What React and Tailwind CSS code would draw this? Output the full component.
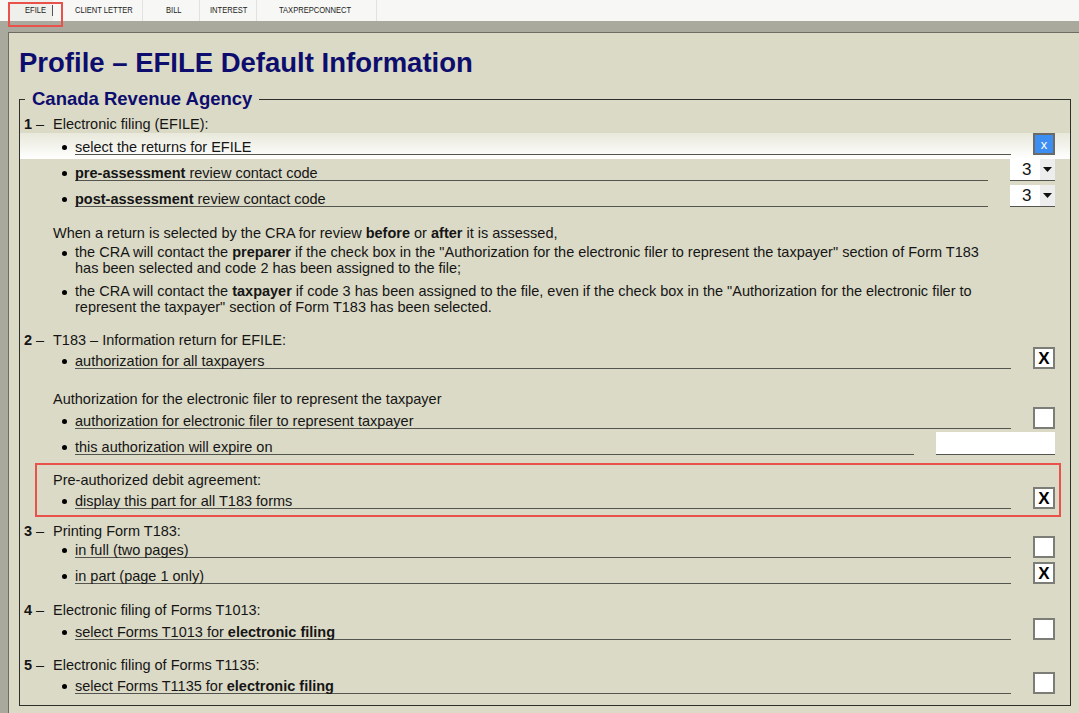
import React from 'react';

function Check({ checked, blue }) {
  if (blue) {
    return (
      <div className="flex h-[22px] w-[22px] items-center justify-center border-2 border-[#6a6a66] bg-[#3d8ef2] text-[13px] leading-none text-white">
        x
      </div>
    );
  }
  return (
    <div className="flex h-[22px] w-[22px] items-center justify-center border-2 border-[#7d7d78] bg-white text-[17px] font-bold leading-none text-black">
      {checked ? 'X' : ''}
    </div>
  );
}

function Select3() {
  return (
    <div className="flex h-[22px] w-[45px] border-b border-[#55554f] bg-white">
      <div className="flex flex-1 items-center pl-[12px] text-[17px] leading-none">3</div>
      <div className="flex w-[15px] items-center justify-center bg-[#ededed]">
        <svg width="9" height="5" viewBox="0 0 9 5">
          <path d="M0 0h9L4.5 5z" fill="#111" />
        </svg>
      </div>
    </div>
  );
}

function DateBox() {
  return <div className="h-[23px] w-[119px] border-b border-[#55554f] bg-white" />;
}

function Heading({ num, className, children }) {
  return (
    <div className={`flex h-[18px] items-center pl-[4px] leading-[18px] ${className}`}>
      <span className="w-[29px] shrink-0">
        <b>{num}</b> –
      </span>
      <span>{children}</span>
    </div>
  );
}

function Item({ className, control, children }) {
  return (
    <div className={`flex items-end pb-[4px] pl-[42px] pr-[15px] ${className}`}>
      <div className="mb-[5px] mr-[8px] h-[5px] w-[5px] shrink-0 rounded-full bg-black" />
      <div className="flex-1 border-b border-[#55554f] leading-[14px]">{children}</div>
      <div className="ml-[22px] shrink-0">{control}</div>
    </div>
  );
}

function Note({ className, children }) {
  return (
    <div className={`flex pl-[42px] leading-[16px] ${className}`}>
      <div className="mr-[8px] mt-[7px] h-[5px] w-[5px] shrink-0 rounded-full bg-black" />
      <div>{children}</div>
    </div>
  );
}

const tabs = [
  { label: 'CLIENT LETTER', cls: 'w-[90px] pl-[22px]' },
  { label: 'BILL', cls: 'w-[57px] pl-[23px]' },
  { label: 'INTEREST', cls: 'w-[57px] pl-[10px]' },
  { label: 'TAXPREPCONNECT', cls: 'w-[120px] pl-[22px]' },
];

export default function App() {
  return (
    <div className="relative h-[713px] w-[1079px] overflow-hidden bg-[#aaa99d] font-['Liberation_Sans',Arial,sans-serif] text-[14.5px] text-[#151515]">
      <div className="flex h-[21px] items-center bg-[#f7f7f5] text-[9px] text-[#222]">
        <div className="ml-[10px] flex h-[21px] w-[43px] items-center whitespace-nowrap bg-[#efefec] pl-[15px]">
          <span className="inline-block origin-left scale-x-[0.84]">EFILE</span>
          <span className="ml-auto h-[11px] border-r border-[#555]" />
        </div>
        {tabs.map((t) => (
          <div key={t.label} className={`flex h-[21px] items-center whitespace-nowrap border-r border-[#e2e2de] ${t.cls}`}>
            <span className="inline-block origin-left scale-x-[0.84]">{t.label}</span>
          </div>
        ))}
      </div>
      <div className="pointer-events-none absolute left-[8px] top-[2px] h-[25px] w-[55px] border-2 border-[#e8524a]" />

      <div className="ml-[8px] mt-[11px] h-[681px] border-l border-t border-[#6d6c63] bg-[#dbdac6]">
        <h1 className="ml-[10px] mt-[13px] text-[27.5px] font-bold leading-[34px] text-[#0d0d6e]">
          Profile – EFILE Default Information
        </h1>

        <fieldset className="ml-[10px] mt-[8px] w-[1052px] border border-[#2e2e2a] pb-[7px]">
          <legend className="ml-[5px] px-[7px] text-[18.5px] font-bold leading-[22px] text-[#0d0d6e]">
            Canada Revenue Agency
          </legend>

          <Heading num="1" className="mt-[5px]">Electronic filing (EFILE):</Heading>
          <div className="bg-gradient-to-b from-[#e8e8db] to-white">
            <Item className="h-[26px]" control={<Check blue />}>select the returns for EFILE</Item>
          </div>
          <Item className="h-[26px]" control={<Select3 />}>
            <b>pre-assessment</b> review contact code
          </Item>
          <Item className="h-[26px]" control={<Select3 />}>
            <b>post-assessment</b> review contact code
          </Item>

          <div className="mt-[14px] pl-[33px] leading-[16px]">
            When a return is selected by the CRA for review <b>before</b> or <b>after</b> it is assessed,
          </div>
          <Note className="mt-[3px]">
            the CRA will contact the <b>preparer</b> if the check box in the "Authorization for the electronic filer to represent the taxpayer" section of Form T183
            <br />
            has been selected and code 2 has been assigned to the file;
          </Note>
          <Note className="mt-[7px]">
            the CRA will contact the <b>taxpayer</b> if code 3 has been assigned to the file, even if the check box in the "Authorization for the electronic filer to
            <br />
            represent the taxpayer" section of Form T183 has been selected.
          </Note>

          <Heading num="2" className="mt-[16px]">T183 – Information return for EFILE:</Heading>
          <Item className="h-[24px]" control={<Check checked />}>authorization for all taxpayers</Item>

          <div className="mt-[18px] pl-[33px] leading-[16px]">Authorization for the electronic filer to represent the taxpayer</div>
          <Item className="h-[26px]" control={<Check />}>authorization for electronic filer to represent taxpayer</Item>
          <Item className="h-[26px]" control={<DateBox />}>this authorization will expire on</Item>

          <div className="relative">
            <div className="pl-[33px] pt-[13px] leading-[16px]">Pre-authorized debit agreement:</div>
            <Item className="h-[25px]" control={<Check checked />}>display this part for all T183 forms</Item>
            <div className="pointer-events-none absolute left-[15px] top-[4px] h-[54px] w-[1026px] border-2 border-[#e8524a]" />
          </div>

          <Heading num="3" className="mt-[9px]">Printing Form T183:</Heading>
          <Item className="h-[22px]" control={<Check />}>in full (two pages)</Item>
          <Item className="h-[26px]" control={<Check checked />}>in part (page 1 only)</Item>

          <Heading num="4" className="mt-[13px]">Electronic filing of Forms T1013:</Heading>
          <Item className="h-[25px]" control={<Check />}>
            select Forms T1013 for <b>electronic filing</b>
          </Item>

          <Heading num="5" className="mt-[12px]">Electronic filing of Forms T1135:</Heading>
          <Item className="h-[24px]" control={<Check />}>
            select Forms T1135 for <b>electronic filing</b>
          </Item>
        </fieldset>
      </div>
    </div>
  );
}
